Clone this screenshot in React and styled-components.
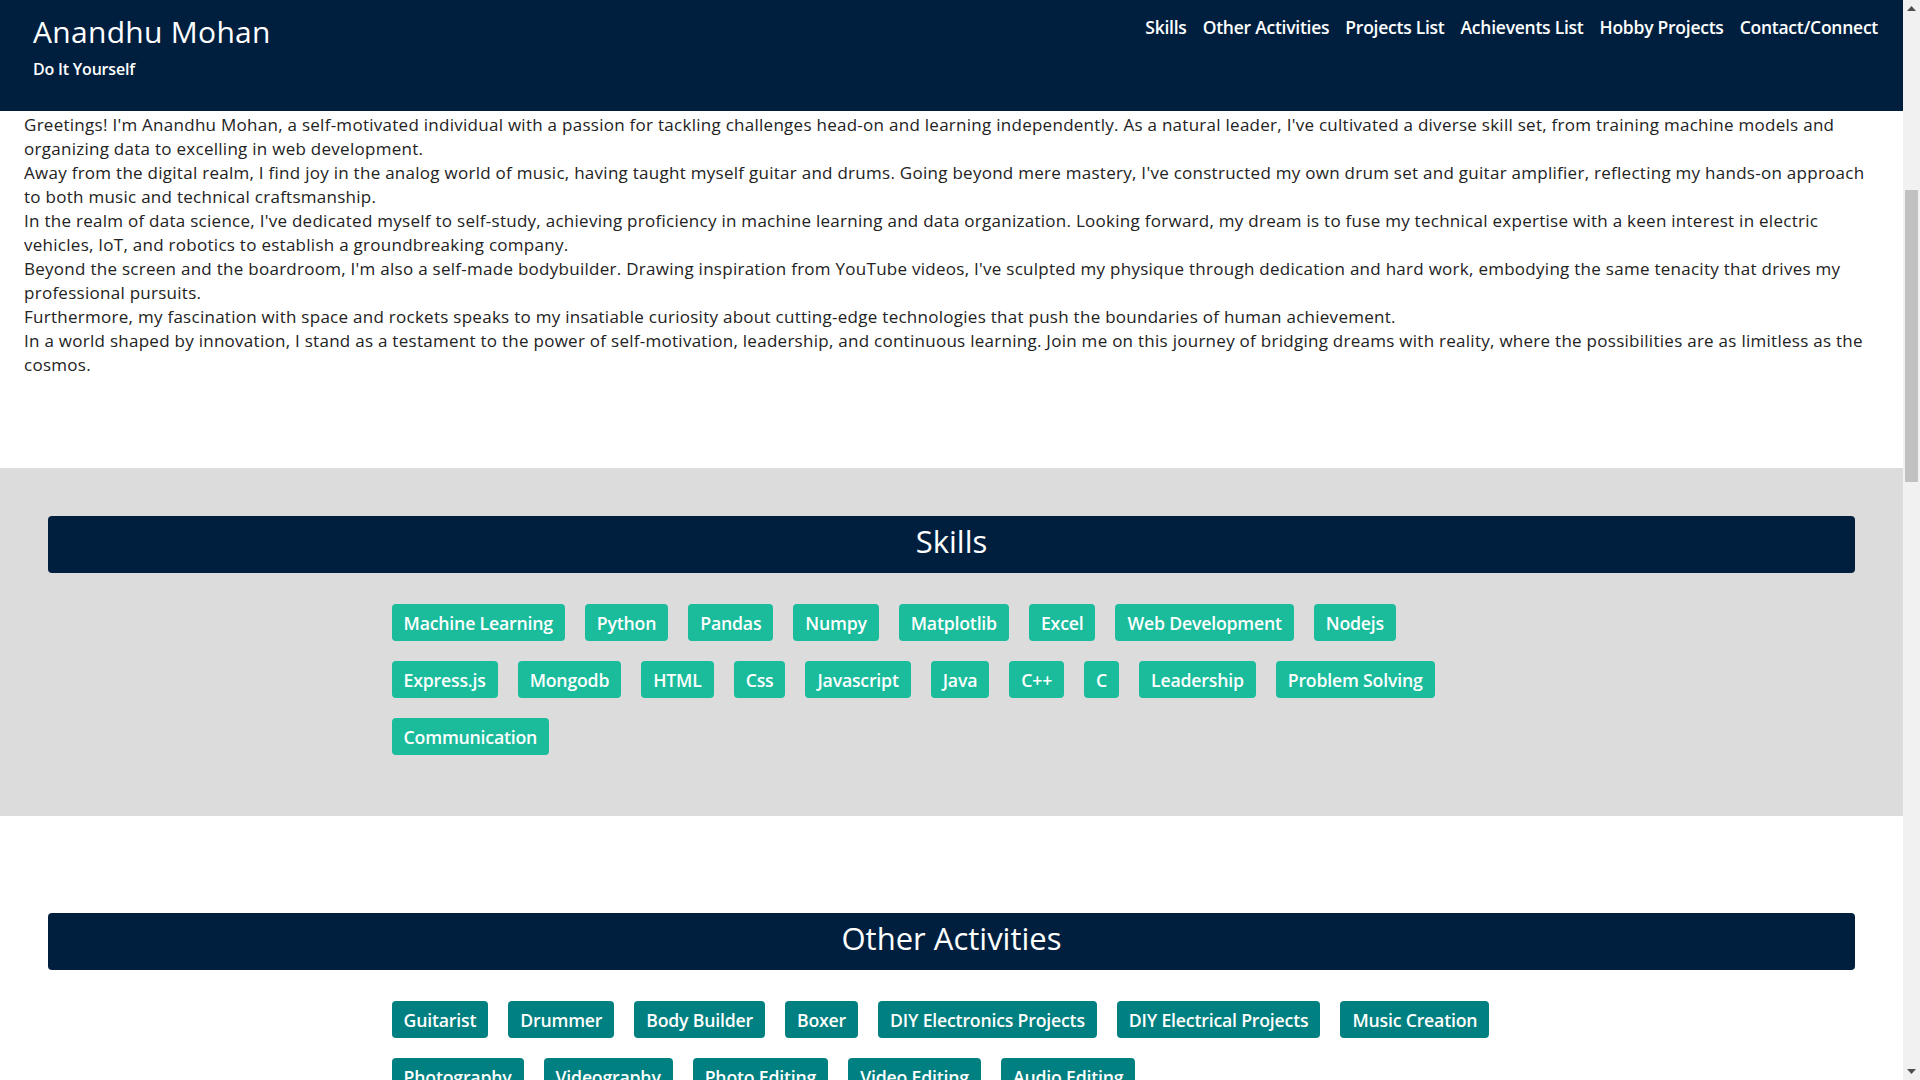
import React from "react";
import styled, { createGlobalStyle } from "styled-components";

// colors
const colors = {
    navy: "#001f3f",
    grey: "#dcdcdc",
    skill: "#1abc9c",
    activity: "#008080",
    text: "#222222",
    white: "#ffffff",
    track: "#f1f1f1",
    thumb: "#c1c1c1",
    arrow: "#505050"
}

const GlobalStyle = createGlobalStyle`
    body {
        margin: 0;
        overflow: hidden;
        font-family: "Open Sans", "Liberation Sans", sans-serif;
        color: ${colors.text};
        background: ${colors.white};
    }
`

// window frame with the page and its scroll bar
const Shell = styled.div`
    display: flex;
    height: 100vh;
`

const Page = styled.main`
    flex: 1;
    min-width: 0;
    overflow: hidden;
`

const ScrollBar = styled.div`
    display: flex;
    flex-direction: column;
    width: 17px;
    background: ${colors.track};
`

const ScrollArrow = styled.div`
    display: flex;
    align-items: center;
    justify-content: center;
    height: 17px;
`

const ScrollTrack = styled.div`
    flex: 1;
    padding: 0 2px;
`

const ScrollThumb = styled.div`
    height: 292px;
    margin-top: 173px;
    background: ${colors.thumb};
`

// header
const Header = styled.header`
    display: flex;
    justify-content: space-between;
    align-items: flex-start;
    height: 111px;
    box-sizing: border-box;
    padding: 12px 25px 0 33px;
    background: ${colors.navy};
    color: ${colors.white};
`

const Brand = styled.div`
    display: flex;
    flex-direction: column;
`

const Title = styled.h1`
    margin: 0;
    font-size: 30px;
    font-weight: 500;
    line-height: 40px;
    letter-spacing: 0.3px;
`

const Subtitle = styled.span`
    margin-top: 6px;
    font-size: 16px;
    font-weight: 600;
    letter-spacing: -0.2px;
`

const Nav = styled.nav`
    display: flex;
    gap: 16px;
    padding-top: 3px;
`

const NavLink = styled.a`
    color: ${colors.white};
    text-decoration: none;
    font-size: 17.5px;
    font-weight: 600;
    letter-spacing: -0.25px;
    cursor: pointer;
`

// about
const About = styled.section`
    padding: 2px 24px 91px 24px;
`

const Line = styled.p`
    margin: 0;
    font-size: 17px;
    line-height: 24px;
    letter-spacing: 0.27px;
`

// sections
const Section = styled.section`
    padding: ${props => props.$top}px 0 51px 0;
    background: ${props => props.$bg};
`

const SectionBar = styled.div`
    display: flex;
    align-items: center;
    justify-content: center;
    height: 57px;
    box-sizing: border-box;
    padding-bottom: 8px;
    margin: 0 48px;
    border-radius: 4px;
    background: ${colors.navy};
    color: ${colors.white};
    font-size: 31px;
    font-weight: 500;
`

const TagList = styled.div`
    display: flex;
    flex-wrap: wrap;
    width: 60%;
    margin: 21px auto 0 auto;
    box-sizing: border-box;
    padding-left: 1px;
`

const Tag = styled.span`
    display: inline-flex;
    align-items: center;
    height: 37px;
    margin: 10px;
    padding: 0 12px;
    border-radius: 4px;
    background: ${props => props.$color};
    color: ${colors.white};
    font-size: 17.7px;
    font-weight: 600;
    letter-spacing: -0.2px;
`

const navItems = ["Skills", "Other Activities", "Projects List", "Achievents List", "Hobby Projects", "Contact/Connect"];

const aboutLines = [
    "Greetings! I'm Anandhu Mohan, a self-motivated individual with a passion for tackling challenges head-on and learning independently. As a natural leader, I've cultivated a diverse skill set, from training machine models and organizing data to excelling in web development.",
    "Away from the digital realm, I find joy in the analog world of music, having taught myself guitar and drums. Going beyond mere mastery, I've constructed my own drum set and guitar amplifier, reflecting my hands-on approach to both music and technical craftsmanship.",
    "In the realm of data science, I've dedicated myself to self-study, achieving proficiency in machine learning and data organization. Looking forward, my dream is to fuse my technical expertise with a keen interest in electric vehicles, IoT, and robotics to establish a groundbreaking company.",
    "Beyond the screen and the boardroom, I'm also a self-made bodybuilder. Drawing inspiration from YouTube videos, I've sculpted my physique through dedication and hard work, embodying the same tenacity that drives my professional pursuits.",
    "Furthermore, my fascination with space and rockets speaks to my insatiable curiosity about cutting-edge technologies that push the boundaries of human achievement.",
    "In a world shaped by innovation, I stand as a testament to the power of self-motivation, leadership, and continuous learning. Join me on this journey of bridging dreams with reality, where the possibilities are as limitless as the cosmos."
];

const skills = ["Machine Learning", "Python", "Pandas", "Numpy", "Matplotlib", "Excel", "Web Development", "Nodejs", "Express.js", "Mongodb", "HTML", "Css", "Javascript", "Java", "C++", "C", "Leadership", "Problem Solving", "Communication"];

const activities = ["Guitarist", "Drummer", "Body Builder", "Boxer", "DIY Electronics Projects", "DIY Electrical Projects", "Music Creation", "Photography", "Videography", "Photo Editing", "Video Editing", "Audio Editing"];

function Arrow({ down }) {
    return (
        <svg width="9" height="5" viewBox="0 0 9 5">
            <path d={down ? "M0 0 L9 0 L4.5 5 Z" : "M0 5 L9 5 L4.5 0 Z"} fill={colors.arrow} />
        </svg>
    )
}

export default function App() {
    return (
        <Shell>
            <GlobalStyle />
            <Page>
                <Header>
                    <Brand>
                        <Title>Anandhu Mohan</Title>
                        <Subtitle>Do It Yourself</Subtitle>
                    </Brand>
                    <Nav>
                        {navItems.map(item => <NavLink key={item}>{item}</NavLink>)}
                    </Nav>
                </Header>
                <About>
                    {aboutLines.map((line, i) => <Line key={i}>{line}</Line>)}
                </About>
                <Section $bg={colors.grey} $top={48}>
                    <SectionBar>Skills</SectionBar>
                    <TagList>
                        {skills.map(s => <Tag key={s} $color={colors.skill}>{s}</Tag>)}
                    </TagList>
                </Section>
                <Section $bg={colors.white} $top={97}>
                    <SectionBar>Other Activities</SectionBar>
                    <TagList>
                        {activities.map(a => <Tag key={a} $color={colors.activity}>{a}</Tag>)}
                    </TagList>
                </Section>
            </Page>
            <ScrollBar>
                <ScrollArrow><Arrow /></ScrollArrow>
                <ScrollTrack>
                    <ScrollThumb />
                </ScrollTrack>
                <ScrollArrow><Arrow down /></ScrollArrow>
            </ScrollBar>
        </Shell>
    )
}
